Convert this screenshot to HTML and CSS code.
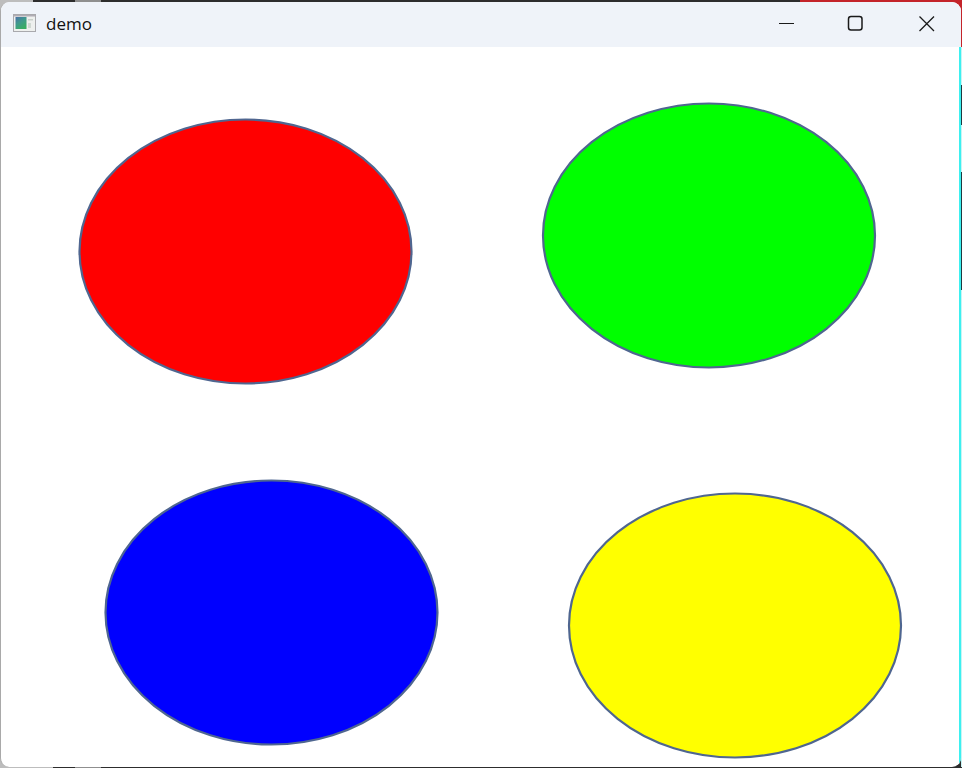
FILE: index.html
```html
<!DOCTYPE html>
<html lang="en">
<head>
<meta charset="utf-8">
<title>demo</title>
<link rel="stylesheet" href="styles.css">
</head>
<body>
<main class="window">
  <header class="titlebar">
    <svg class="app-icon" width="23" height="18" viewBox="0 0 23 18" aria-hidden="true">
      <defs>
        <linearGradient id="pane" x1="0" y1="0" x2="0.6" y2="1">
          <stop offset="0" stop-color="#4a6fa8"/>
          <stop offset="0.5" stop-color="#3f9a8c"/>
          <stop offset="1" stop-color="#38ad62"/>
        </linearGradient>
      </defs>
      <rect x="0.5" y="0.5" width="22" height="17" fill="#eef0ee" stroke="#a9a9ad"/>
      <rect x="1" y="1" width="21" height="1.500" fill="#b0acb4"/>
      <rect x="2.500" y="3" width="11" height="12" fill="url(#pane)"/>
      <rect x="15" y="5" width="5" height="1.500" fill="#c9d0cb"/>
      <rect x="15" y="9" width="3" height="5" fill="#d0d8d2"/>
    </svg>
    <span class="title">demo</span>
    <div class="controls">
      <svg class="control" width="70" height="20" viewBox="0 0 70 20" aria-hidden="true"><path d="M30 10.500H45" stroke="#1a1a1a" stroke-width="1"/></svg>
      <svg class="control" width="70" height="20" viewBox="0 0 70 20" aria-hidden="true"><rect x="29.500" y="3.500" width="13.500" height="13.500" rx="2.500" fill="none" stroke="#1a1a1a" stroke-width="1.500"/></svg>
      <svg class="control" width="70" height="20" viewBox="0 0 70 20" aria-hidden="true"><path d="M30.500 3.500L45 18M45 3.500L30.500 18" stroke="#1a1a1a" stroke-width="1.300" fill="none"/></svg>
    </div>
  </header>
  <div class="client">
    <svg class="canvas" viewBox="1 47 958 720" aria-hidden="true">
      <ellipse class="blob red" cx="245.500" cy="251.500" rx="166" ry="132"/>
      <ellipse class="blob green" cx="709" cy="235.500" rx="166" ry="132"/>
      <ellipse class="blob blue" cx="271.500" cy="612.500" rx="166" ry="132"/>
      <ellipse class="blob yellow" cx="735" cy="625.500" rx="166" ry="132"/>
    </svg>
  </div>
</main>
</body>
</html>
```
FILE: styles.css
```css
html, body {
  margin: 0;
  height: 100%;
}

body {
  display: flex;
  width: 962px;
  height: 768px;
  box-sizing: border-box;
  padding: 2px 1px 1px 0;
  overflow: hidden;
  background:
    linear-gradient(#1f3a40, #1f3a40) 961px 85px / 1px 40px no-repeat,
    linear-gradient(#1f3a40, #1f3a40) 961px 172px / 1px 118px no-repeat,
    linear-gradient(#c8f4f4, #c8f4f4) 961px 47px / 1px 720px no-repeat,
    linear-gradient(#c4242a, #c4242a) right top / 162px 47px no-repeat,
    linear-gradient(#bdbdbd, #bdbdbd) left top / 33px 12px no-repeat,
    linear-gradient(#8f8f8f, #8f8f8f) 75px 0 / 26px 2px no-repeat,
    linear-gradient(#bdbdbd, #bdbdbd) left bottom / 53px 12px no-repeat,
    linear-gradient(#8f8f8f, #8f8f8f) 75px 767px / 26px 1px no-repeat,
    #2d2d2d;
  font-family: "Open Sans", "Noto Sans", sans-serif;
}

.window {
  flex: 1;
  display: flex;
  flex-direction: column;
  border-left: 1px solid #a9a9a9;
  border-radius: 9px;
  background: #fff;
  overflow: hidden;
}

.titlebar {
  flex: none;
  box-sizing: border-box;
  height: 45px;
  padding: 0 2px 3px 12px;
  display: flex;
  align-items: center;
  background: #eff3f9;
  color: #111;
}

.app-icon {
  flex: none;
  margin-right: 10px;
  filter: blur(0.3px);
}

.title {
  font-size: 17px;
}

.controls {
  display: flex;
  margin-left: auto;
}

.control {
  display: block;
}

.client {
  flex: 1;
  display: flex;
  min-height: 0;
  border-right: 2px solid #3df0f0;
}

.canvas {
  flex: 1;
  display: block;
  min-width: 0;
  filter: blur(0.5px);
}

.blob {
  stroke: #4f6690;
  stroke-width: 2.200;
}

.red { fill: #f00; }
.green { fill: #0f0; }
.blue { fill: #00f; }
.yellow { fill: #ff0; }
```
